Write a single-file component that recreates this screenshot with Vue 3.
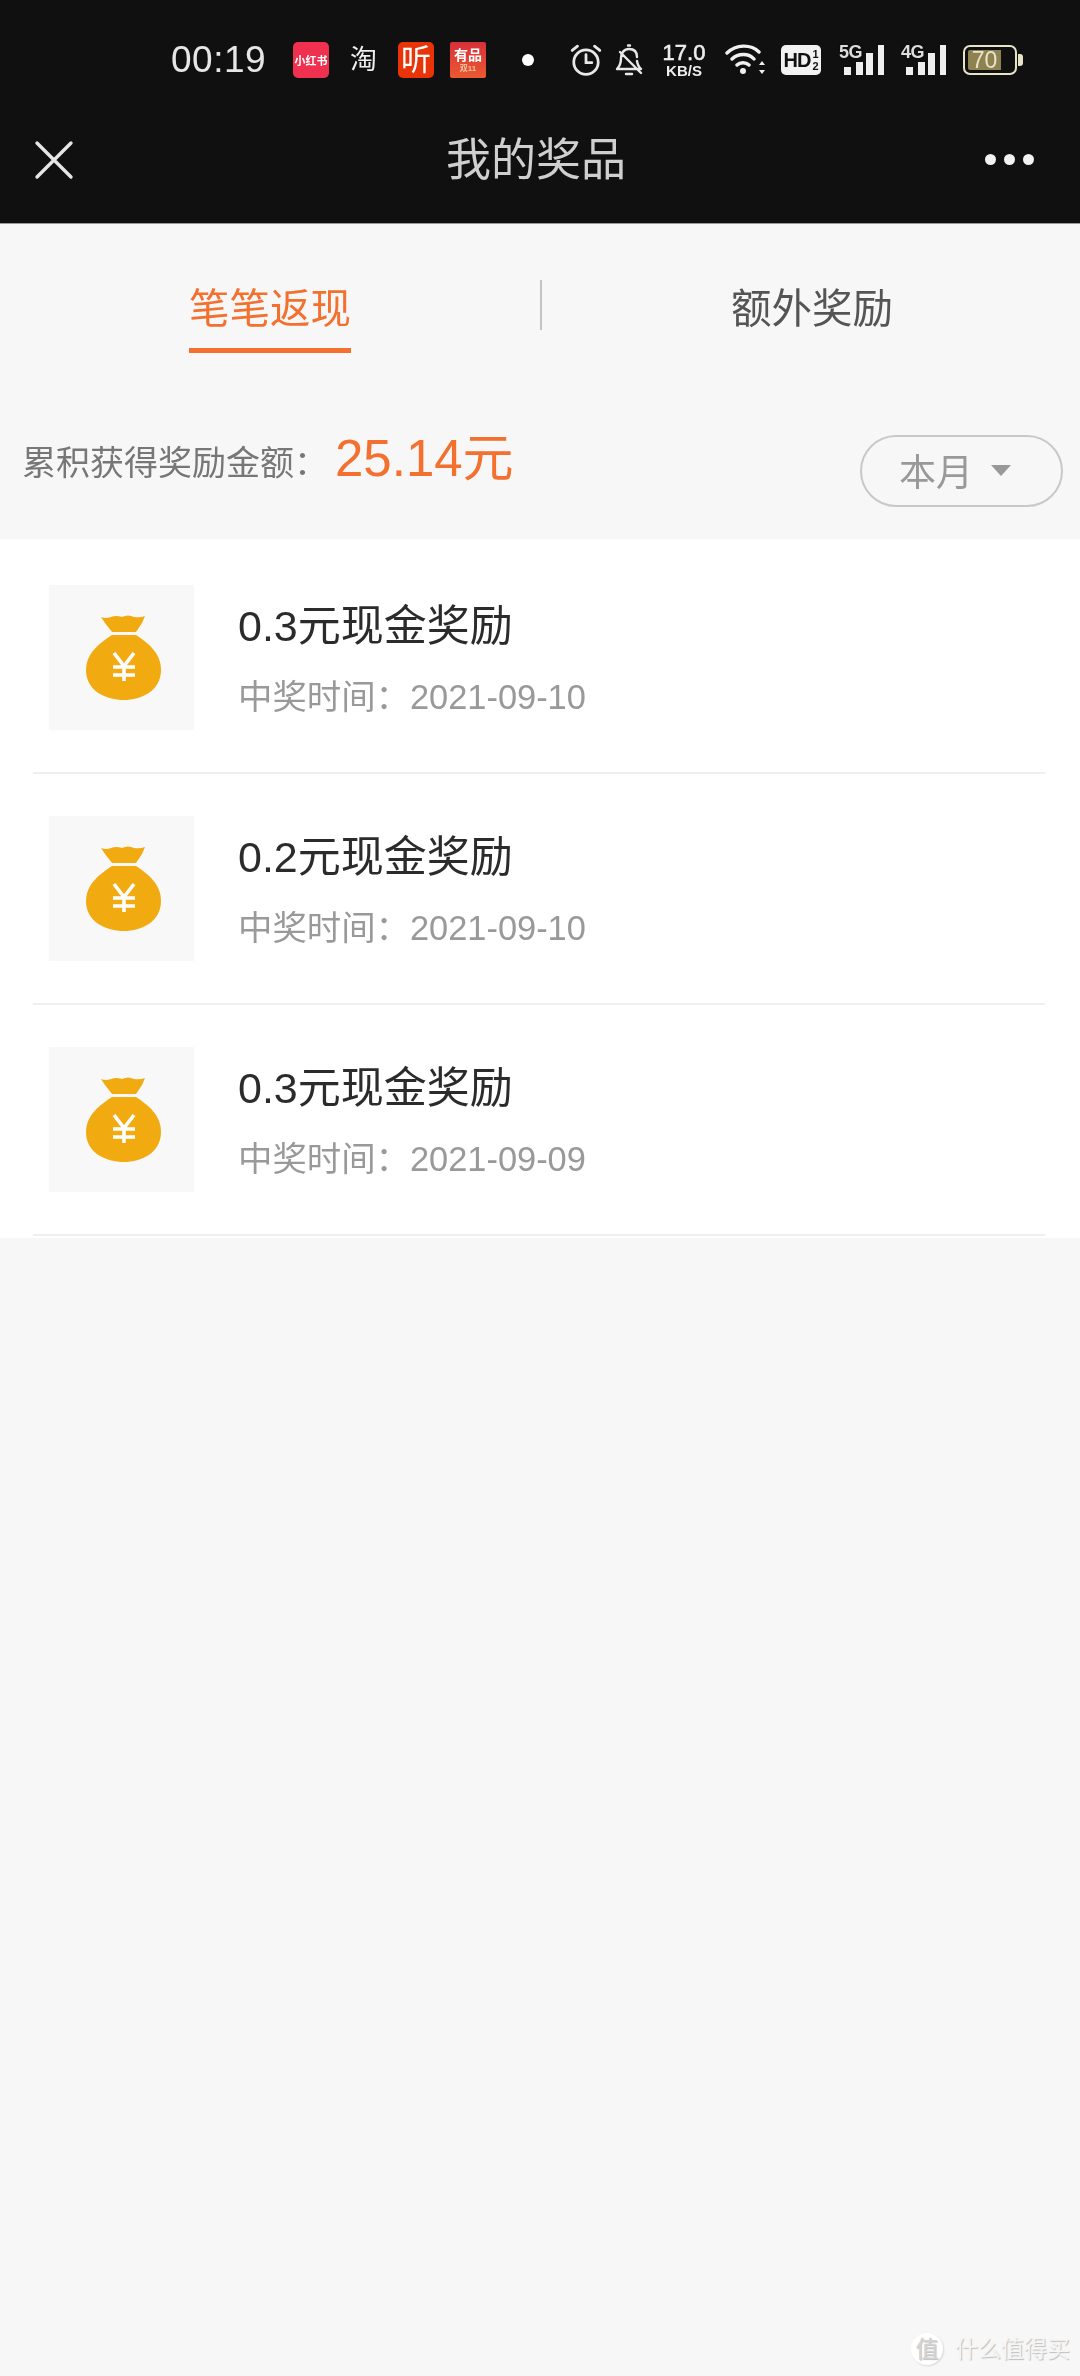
<script setup>
const prizes = [
  { id: 1, title: '0.3元现金奖励', date: '2021-09-10' },
  { id: 2, title: '0.2元现金奖励', date: '2021-09-10' },
  { id: 3, title: '0.3元现金奖励', date: '2021-09-09' },
]
</script>

<template>
  <div class="page">
    <header class="head">
      <div class="status">
        <span class="time">00:19</span>
        <span class="tile red-book"><span>小红书</span></span>
        <span class="glyph">淘</span>
        <span class="tile ting">听</span>
        <span class="tile youpin"><span>有品</span><small>双11</small></span>
        <span class="dot"></span>
        <svg class="alarm" viewBox="0 0 32 32" fill="none" stroke="#e8e8e8" stroke-width="2.6" stroke-linecap="round">
          <circle cx="16" cy="18" r="11.5" />
          <path d="M16 11v7.5h5.5M3 7l5-4M29 7l-5-4" />
        </svg>
        <svg class="bell" viewBox="0 0 28 34" fill="none" stroke="#e8e8e8" stroke-width="2.4" stroke-linecap="round" stroke-linejoin="round">
          <path d="M2 26c3-3 4-6 4-11 0-5 3-9 8-9s8 3 8 8M22 18c.5 3 1.500 6 4 8H2M11 31h6M13 2.500h2M5 9l21 21" />
        </svg>
        <span class="speed"><b>17.0</b><i>KB/S</i></span>
        <svg class="wifi" viewBox="0 0 42 32" fill="none" stroke="#f0f0f0" stroke-width="3.4" stroke-linecap="round">
          <path d="M2 9c9-9 24-9 32-1M7 15c6-6 17-6 22 0M12 21c3-3 9-3 12 0" />
          <circle cx="18" cy="27" r="3" fill="#f0f0f0" stroke="none" />
          <path d="M37 17l-3 4h6zM37 30l-3-4h6z" fill="#f0f0f0" stroke="none" />
        </svg>
        <span class="hd">HD<span class="hd-sub">1<br />2</span></span>
        <span class="signal">
          <span class="net">5G</span>
          <svg viewBox="0 0 44 32" fill="#efefef">
            <rect x="3" y="22" width="7" height="8" /><rect x="15" y="17" width="7" height="13" />
            <rect x="25" y="8" width="7" height="22" /><rect x="37" y="0" width="6" height="30" />
          </svg>
        </span>
        <span class="signal">
          <span class="net">4G</span>
          <svg viewBox="0 0 44 32" fill="#efefef">
            <rect x="3" y="22" width="7" height="8" /><rect x="15" y="17" width="7" height="13" />
            <rect x="25" y="8" width="7" height="22" /><rect x="37" y="0" width="6" height="30" />
          </svg>
        </span>
        <span class="battery"><span class="level">70</span></span>
        <span class="cap"></span>
      </div>
      <nav class="bar">
        <svg class="close" viewBox="0 0 40 40" fill="none" stroke="#e6e6e6" stroke-width="3.400" stroke-linecap="round">
          <path d="M3 3l34 34M37 3L3 37" />
        </svg>
        <h1 class="title">我的奖品</h1>
        <div class="more"><span></span><span></span><span></span></div>
      </nav>
    </header>

    <section class="tabs">
      <div class="tab active">
        <span class="tab-label">笔笔返现</span>
      </div>
      <div class="tab">
        <span class="tab-label">额外奖励</span>
      </div>
    </section>

    <section class="summary">
      <div class="total">
        <span class="total-label">累积获得奖励金额：</span>
        <span class="amount">25.14元</span>
      </div>
      <div class="range">本月<span class="caret"></span></div>
    </section>

    <ul class="list">
      <li v-for="p in prizes" :key="p.id" class="row">
        <div class="thumb">
          <svg class="bag" viewBox="0 0 75 85">
            <path fill="#f1ab10" d="M15 2Q20 4 25 2Q30 0 36 2Q42-1 48 2Q54 3 59 1L56 8L50 17H26L19 8Z" />
            <path fill="#f1ab10" d="M26 20H50C62 28 75 38 75 55C75 76 55 85 38 85C20 85 0 76 0 55C0 38 14 28 26 20Z" />
            <path fill="none" stroke="#fff" stroke-width="3.600" d="M28 38l10 13 10-13M38 51v15M27 52h22M27 60h22" />
          </svg>
        </div>
        <div class="info">
          <div class="name">{{ p.title }}</div>
          <div class="date">中奖时间：{{ p.date }}</div>
        </div>
      </li>
    </ul>

    <div class="mark"><span class="mark-badge">值</span><span class="mark-text">什么值得买</span></div>
  </div>
</template>

<style>
body { background: #f7f7f7; }
</style>

<style scoped>
.page {
  position: relative;
  width: 1080px;
  height: 2376px;
  overflow: hidden;
  background: #f7f7f7;
  font-family: "Liberation Sans", "Noto Sans CJK SC", sans-serif;
}
.head, .tabs, .summary, .list { filter: blur(0.5px); }
.head { background: #101010; height: 224px; border-bottom: 1px solid #999; box-sizing: border-box; }
.status { height: 120px; display: flex; align-items: center; padding-left: 171px; box-sizing: border-box; }
.time { width: 96px; color: #e6e6e6; font-size: 37px; line-height: 44px; letter-spacing: 0.5px; }
.tile {
  width: 36px; height: 36px; border-radius: 5px; display: flex; flex-direction: column;
  align-items: center; justify-content: center; color: #fff; flex: none;
}
.red-book { margin-left: 26px; background: #f0304f; font-size: 11px; font-weight: 700; white-space: nowrap; }
.glyph { margin-left: 21px; width: 28px; font-size: 27px; line-height: 36px; color: #eee; }
.ting { margin-left: 20px; background: #e93308; font-size: 30px; line-height: 36px; }
.youpin { margin-left: 16px; border-radius: 2px; background: linear-gradient(#d9303a, #ea5a30); font-size: 14px; line-height: 18px; font-weight: 700; }
.youpin small { font-size: 8px; line-height: 10px; color: #f7c2a0; }
.dot { margin-left: 36px; width: 12px; height: 12px; border-radius: 50%; background: #fff; flex: none; }
.alarm { margin-left: 35px; width: 34px; height: 34px; flex: none; }
.bell { margin-left: 12px; width: 28px; height: 34px; flex: none; }
.speed { margin-left: 19px; width: 44px; display: flex; flex-direction: column; align-items: center; color: #eee; font-weight: 700; }
.speed b { font-size: 22px; line-height: 21px; font-weight: 400; -webkit-text-stroke: 0.6px #eee; }
.speed i { font-size: 15px; line-height: 15px; font-style: normal; }
.wifi { margin-left: 19px; width: 42px; height: 32px; flex: none; }
.hd {
  margin-left: 14px; width: 40px; height: 30px; border-radius: 5px; background: #f2f2f2; color: #111;
  font-size: 20px; line-height: 30px; font-weight: 700; display: flex; justify-content: center; letter-spacing: -1px; flex: none;
}
.hd-sub { font-size: 11px; line-height: 12px; padding-top: 3px; margin-left: 2px; letter-spacing: 0; }
.signal { position: relative; width: 45px; height: 34px; flex: none; margin-left: 18px; }
.signal + .signal { margin-left: 17px; }
.signal svg { position: absolute; left: 2px; bottom: 0; width: 44px; height: 32px; }
.net { position: absolute; left: 0; top: 0; font-size: 18px; line-height: 18px; color: #ddd; font-weight: 700; letter-spacing: -0.5px; text-shadow: 0 0 2px #101010, 0 0 2px #101010; }
.battery {
  margin-left: 17px; width: 54px; height: 30px; border: 2px solid #e7e3c6; border-radius: 7px; box-sizing: border-box;
  padding: 3px; display: flex; flex: none;
}
.level { width: 33px; background: #8e8350; color: #e8e4cc; font-size: 23px; line-height: 20px; text-align: center; border-radius: 2px 0 0 2px; }
.cap { width: 5px; height: 12px; background: #e7e3c6; border-radius: 0 3px 3px 0; flex: none; margin-left: 1px; }

.bar { height: 80px; display: flex; align-items: center; justify-content: space-between; padding: 0 46px 2px 34px; position: relative; box-sizing: border-box; }
.close { width: 40px; height: 40px; margin-top: 2px; }
.title {
  position: absolute; left: 446px; top: 13px; margin: 0; width: 180px; text-align: center;
  font-size: 45px; line-height: 56px; font-weight: 400; color: #cfcfcf;
}
.more { display: flex; gap: 8px; }
.more span { width: 11px; height: 11px; border-radius: 50%; background: #f2f2f2; }

.tabs { display: flex; padding-top: 56px; height: 128px; box-sizing: border-box; }
.tab { width: 540px; height: 68px; display: flex; justify-content: center; box-sizing: border-box; }
.tab + .tab { border-left: 2px solid #c4c4c4; height: 50px; padding-left: 2px; }
.tab-label { font-size: 40.5px; line-height: 58px; height: 68px; box-sizing: content-box; color: #555; }
.active .tab-label { color: #f3702f; border-bottom: 5px solid #f3702f; }

.summary { display: flex; justify-content: space-between; align-items: center; padding: 83px 17px 32px 22px; }
.total { display: flex; align-items: center; margin-bottom: 16px; }
.total-label { font-size: 34px; line-height: 50px; color: #777; white-space: nowrap; }
.amount { margin-left: 7px; font-size: 51px; line-height: 60px; color: #f3702f; margin-top: -8px; }
.range {
  width: 203px; height: 72px; box-sizing: border-box; border: 2px solid #c8c8c8; border-radius: 36px;
  display: flex; align-items: center; padding: 0 0 2px 37px; font-size: 37px; color: #999;
}
.caret { margin-left: 18px; border-top: 11px solid #999; border-left: 10px solid transparent; border-right: 10px solid transparent; }

.list { margin: 0; padding: 4px 35px 2px 33px; list-style: none; background: #fff; }
.row { height: 231px; box-sizing: border-box; padding: 42px 0 0 16px; display: flex; align-items: flex-start; border-bottom: 2px solid #efefef; }
.thumb { width: 145px; height: 145px; padding-left: 4px; box-sizing: border-box; background: #f8f8f8; display: flex; align-items: center; justify-content: center; flex: none; }
.bag { width: 75px; height: 85px; }
.info { margin-left: 44px; padding-top: 11px; }
.name { font-size: 43px; line-height: 60px; color: #2b2b2b; }
.date { margin-top: 16px; font-size: 34.4px; line-height: 50px; color: #999; }

.mark { position: absolute; right: 10px; bottom: 11px; display: flex; align-items: center; color: #f5f5f5; text-shadow: 1px 1px 1px #bdbdbd; }
.mark-badge {
  width: 32px; height: 32px; border-radius: 50%; background: #fff; font-size: 23px; line-height: 32px; text-align: center; margin-right: 12px;
  color: #d4d4d4; box-shadow: 1px 1px 2px #d8d8d8;
}
.mark-text { font-size: 23px; line-height: 30px; }
</style>
